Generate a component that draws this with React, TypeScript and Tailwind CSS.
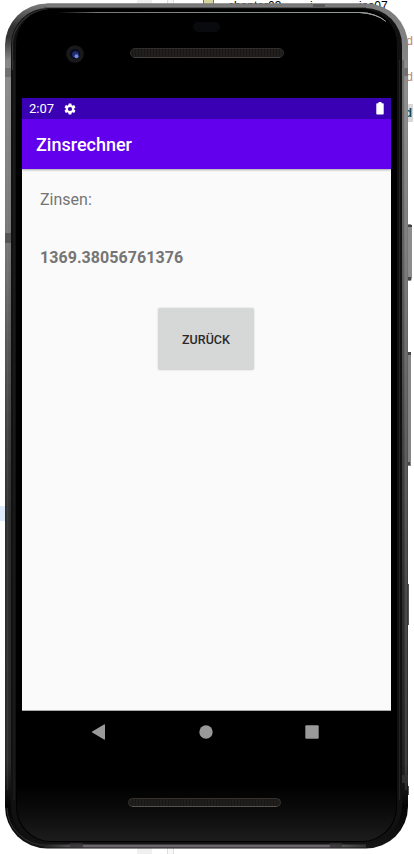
import React from 'react';

function DeviceFrame() {
  return (
    <svg className="absolute inset-0" width="414" height="854" viewBox="0 0 414 854" aria-hidden="true">
      <defs>
        <linearGradient id="rim" x1="0" y1="0" x2="0" y2="1">
          <stop offset="0" stopColor="#7c7c7c" />
          <stop offset="0.1" stopColor="#8a8a8a" />
          <stop offset="0.3" stopColor="#747474" />
          <stop offset="0.5" stopColor="#545454" />
          <stop offset="0.7" stopColor="#3a3a3a" />
          <stop offset="0.9" stopColor="#2a2a2a" />
          <stop offset="0.95" stopColor="#050505" />
          <stop offset="1" stopColor="#151515" />
        </linearGradient>
        <linearGradient id="cornerShade" x1="0" y1="0" x2="0" y2="1">
          <stop offset="0" stopColor="#000" stopOpacity="0" />
          <stop offset="0.4" stopColor="#000" stopOpacity=".6" />
          <stop offset="0.6" stopColor="#000" stopOpacity=".6" />
          <stop offset="1" stopColor="#000" stopOpacity="0" />
        </linearGradient>
        <linearGradient id="leftShade" x1="0" y1="0" x2="0" y2="1">
          <stop offset="0" stopColor="#000" stopOpacity="0" />
          <stop offset="0.5" stopColor="#000" stopOpacity=".35" />
          <stop offset="1" stopColor="#000" stopOpacity="0" />
        </linearGradient>
        <linearGradient id="shine" x1="0" y1="0" x2="1" y2="0">
          <stop offset="0" stopColor="#000" />
          <stop offset="0.12" stopColor="#75797b" />
          <stop offset="0.95" stopColor="#969c9b" />
          <stop offset="1" stopColor="#b5baba" />
        </linearGradient>
        <linearGradient id="chin" x1="0" y1="0" x2="0" y2="1">
          <stop offset="0" stopColor="#000" />
          <stop offset="0.5" stopColor="#0c0c0c" />
          <stop offset="1" stopColor="#1c1c1c" />
        </linearGradient>
        <linearGradient id="bottom" x1="0" y1="0" x2="1" y2="0">
          <stop offset="0" stopColor="#222" />
          <stop offset="0.12" stopColor="#6a676a" />
          <stop offset="0.88" stopColor="#6a676a" />
          <stop offset="1" stopColor="#333" />
        </linearGradient>
        <pattern id="mesh" width="3" height="3" patternUnits="userSpaceOnUse">
          <rect width="3" height="3" fill="#211f1d" />
          <path d="M.5 0v3" stroke="#191716" />
        </pattern>
      </defs>
      <path d="M408 224h3l1 3v51l-1 3h-3z" fill="#8c8c8c" />
      <path d="M408 225h4v2h-4zM408 277h3v3h-3z" fill="#454545" />
      <path d="M408 352h3v114h-3z" fill="#858585" />
      <path d="M407 352h4v3h-4zM408 462h2v3h-2z" fill="#454545" />
      <path d="M408 584h1v41h-1zM408 786h1v9h-1z" fill="#555" />
      <rect x="5" y="3.5" width="403" height="845" rx="42" fill="url(#rim)" />
      <path d="M5 60V45.5A42 42 0 0 1 47 3.5V12L11 60Z" fill="url(#cornerShade)" />
      <rect x="5" y="240" width="6" height="560" fill="url(#leftShade)" />
      <rect x="11" y="8" width="391" height="835" rx="37" fill="#111" />
      <path d="M12.5 70V48A36 36 0 0 1 48 9.5" fill="none" stroke="#555" strokeOpacity=".5" strokeWidth="1.2" />
      <rect x="16" y="9" width="381" height="833" rx="35" fill="#000" />
      <path d="M14 60V800" stroke="#272727" strokeOpacity=".8" />
      <path d="M399.5 60V800" stroke="#242424" />
      <path d="M7.5 60V790" stroke="#aaa" strokeOpacity=".12" strokeWidth="1.5" />
      <path d="M406 60V790" stroke="#bbb" strokeOpacity=".14" strokeWidth="2" />
      <path d="M403 60V790" stroke="#000" strokeOpacity=".25" strokeWidth="1.5" />
      <path d="M17 785H396V807A34 34 0 0 1 362 841H51A34 34 0 0 1 17 807Z" fill="url(#chin)" />
      <path d="M7 808A40 38 0 0 0 47 845.5" fill="none" stroke="#303030" />
      <path d="M47 4.5H366" stroke="#777" strokeWidth="2" />
      <path d="M44 7.5H366" stroke="#555" />
      <path d="M58 12H360Q376 12.5 386 21.5Q376 14 360 13H58Z" fill="url(#shine)" />
      <path d="M360 12.5Q376 13 386 21.5" fill="none" stroke="#9da3a2" />
      <path d="M44 844.5h322v3H44z" fill="url(#bottom)" />
      <path d="M5 68h6v9H5zM402 68h6v8h-6z" fill="#707070" />
      <path d="M5 233h6v10H5z" fill="#555" />
      <path d="M402 775h6v8h-6z" fill="#303030" />
      <path d="M70 843h13v5H70zM330 843h12v5h-12z" fill="#343234" fillOpacity=".75" />
      <path d="M313 4h12v4h-12z" fill="#5a5a5a" />
      <rect x="193" y="22" width="27" height="10" rx="5" fill="#090a0e" />
      <circle cx="75" cy="54" r="8.8" fill="#19191b" />
      <circle cx="75" cy="54" r="5" fill="#080b1d" />
      <circle cx="75.5" cy="54.5" r="3.3" fill="#202d70" />
      <circle cx="76.5" cy="56.3" r="2" fill="#6f8be0" />
      <rect x="130.5" y="48.5" width="153" height="9" rx="4.5" fill="url(#mesh)" stroke="#302d2b" />
      <path d="M134 57.5H280" stroke="#46423f" />
      <rect x="128.5" y="798.5" width="152" height="8" rx="4" fill="url(#mesh)" stroke="#35322e" />
      <path d="M132 806.5H277" stroke="#56524d" />
    </svg>
  );
}

function DesktopBehind() {
  return (
    <div className="absolute inset-0 overflow-hidden bg-white font-['Liberation_Sans',sans-serif] text-[12px] leading-[12px] text-black">
      <div className="grid h-full grid-cols-[8px_129px_15px_15px_7px_1fr] grid-rows-[100%]">
        <div className="mt-[506px] h-[15px] bg-[#deebfa]" />
        <div />
        <div className="bg-[#f0f0f0]" />
        <div />
        <div className="border-x border-[#ddd] bg-[#f8f8f8]" />
        <div className="flex justify-between pl-[29px] pr-px">
          <div className="flex h-[12px] items-start">
            <div className="h-[5px] w-[11px] border border-t-0 border-[#777751] bg-[#d5d49c]" />
            <span className="ml-[14px] w-[82px]">chapter03</span>
            <span className="w-[49px]">i</span>
            <span>ies07</span>
          </div>
          <div className="flex flex-col items-end pt-[35px] text-[#c78461]">
            <span className="h-[36px]">d</span>
            <span className="h-[33px]">d</span>
            <span className="flex h-[18px] w-[13px] items-center justify-end bg-[#d8d8d8] pr-px font-bold text-[#164d60]">d</span>
          </div>
        </div>
      </div>
    </div>
  );
}

export default function App() {
  return (
    <div className="relative h-[854px] w-[414px] overflow-hidden bg-white font-['Roboto',sans-serif]">
      <DesktopBehind />
      <DeviceFrame />
      <div className="relative ml-[22px] w-[369px] pt-[98px]">
        <main className="h-[613px] border-b border-[#aaa] bg-[#fafafa]">
          <div className="flex h-[21px] items-center bg-[#3a00b3] px-[7px] text-white">
            <span className="w-[34px] text-[13px] leading-[21px]">2:07</span>
            <svg width="14" height="14" viewBox="0 0 24 24" fill="currentColor" aria-label="Einstellungen">
              <path d="M19.14 12.94c.04-.3.06-.61.06-.94s-.02-.64-.07-.94l2.03-1.58a.5.5 0 0 0 .12-.61l-1.92-3.32a.5.5 0 0 0-.59-.22l-2.39.96a7 7 0 0 0-1.62-.94l-.36-2.54a.5.5 0 0 0-.48-.41h-3.84a.5.5 0 0 0-.47.41l-.36 2.54c-.59.24-1.13.57-1.62.94l-2.39-.96a.5.5 0 0 0-.59.22L2.74 8.87a.5.5 0 0 0 .12.61l2.03 1.58A7 7 0 0 0 4.8 12c0 .31.02.64.07.94l-2.03 1.58a.5.5 0 0 0-.12.61l1.92 3.32c.12.22.37.29.59.22l2.39-.96c.5.38 1.03.7 1.62.94l.36 2.54c.05.24.24.41.48.41h3.84a.5.5 0 0 0 .47-.41l.36-2.54a7 7 0 0 0 1.62-.94l2.39.96c.22.08.47 0 .59-.22l1.92-3.32a.5.5 0 0 0-.12-.61zM12 15.6A3.6 3.6 0 1 1 12 8.4a3.6 3.6 0 0 1 0 7.2z" />
            </svg>
            <svg className="ml-auto" width="8" height="13" viewBox="0 0 8 13" fill="currentColor" aria-label="Akku"><path d="M2.5 0h3v1.2H7q.7 0 .7.8v9.7q0 .8-.7.8H1q-.7 0-.7-.8V2q0-.8.7-.8h1.5z" /></svg>
          </div>
          <header className="flex h-[50px] items-center bg-[#6200ee] px-[14px] pt-[2px] shadow-[0_1px_2px_rgba(0,0,0,0.35)]">
            <h1 className="text-[18px] font-medium leading-[24px] text-white">Zinsrechner</h1>
          </header>
          <div className="flex flex-col px-[18px] pt-[21px] text-[16px] leading-[20px] text-[#757575]">
            <span>Zinsen:</span>
            <span className="mt-[38px] font-bold tracking-[0.05px]">1369.38056761376</span>
            <button className="ml-[118px] mt-[40px] h-[62px] w-[96px] rounded-[2px] bg-[#d6d7d7] pt-px text-[12.5px] font-medium text-[#2a2a2a] shadow-[0_0_2px_rgba(0,0,0,0.18)]">ZURÜCK</button>
          </div>
        </main>
        <nav className="flex h-[42px] items-center justify-between pl-[69px] pr-[72px] text-[#999]">
          <svg width="15" height="16" viewBox="0 0 15 16" fill="currentColor" aria-label="Zurück"><path d="M13 .5Q14 0 14 1v14q0 1-1 .5L1.2 8.5Q.3 8 1.2 7.5z" /></svg>
          <svg width="14" height="14" viewBox="0 0 14 14" fill="currentColor" aria-label="Startseite"><circle cx="7" cy="7" r="6.7" /></svg>
          <svg width="14" height="14" viewBox="0 0 14 14" fill="currentColor" aria-label="Übersicht"><rect x=".3" y=".3" width="13.4" height="13.4" rx="1" /></svg>
        </nav>
      </div>
    </div>
  );
}
